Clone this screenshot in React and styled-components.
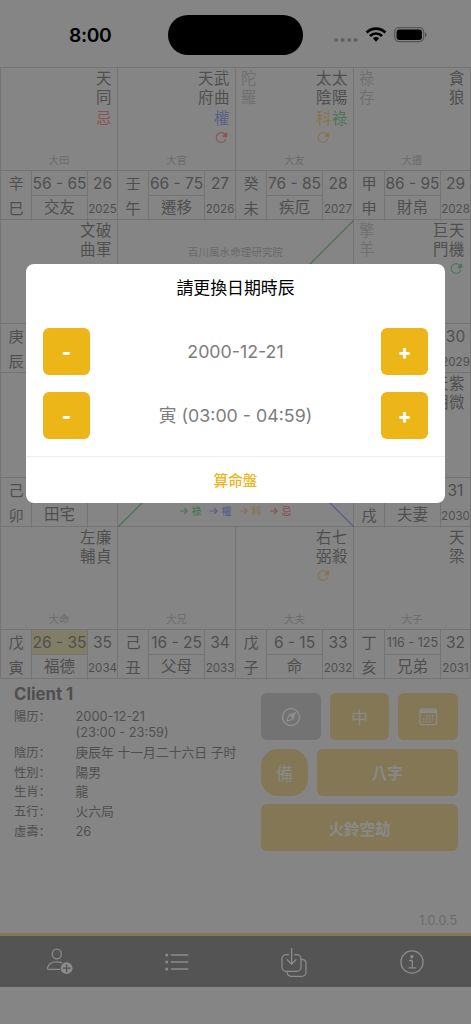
/* eslint-disable react/prop-types */
import React, { useState } from 'react'
import styled, { createGlobalStyle } from 'styled-components'
import { IoReloadOutline } from 'react-icons/io5'

const colors = {
  page: '#858585',
  line: '#747474',
  text: '#4f4f4f',
  soft: '#707070',
  gold: '#847756',
  red: '#8a5254',
  blue: '#58608a',
  green: '#4c7556',
  yellow: '#87744a'
}

// palaces, in reading order. area = name of the grid area
const palaces = [
  { area: 'si', stars: ['天同'], marks: [['忌', 'red']], big: '大田', stem: '辛巳', range: '56 - 65', name: '交友', age: 26, year: 2025 },
  { area: 'wu', stars: ['天府', '武曲'], marks: [null, ['權', 'blue', 'red']], big: '大官', stem: '壬午', range: '66 - 75', name: '遷移', age: 27, year: 2026 },
  { area: 'wei', minor: '陀羅', stars: ['太陰', '太陽'], marks: [['科', 'yellow', 'yellow'], ['祿', 'green']], big: '大友', stem: '癸未', range: '76 - 85', name: '疾厄', age: 28, year: 2027 },
  { area: 'shen', minor: '祿存', stars: ['貪狼'], big: '大遷', stem: '甲申', range: '86 - 95', name: '財帛', age: 29, year: 2028 },
  { area: 'chen', stars: ['文曲', '破軍'], stem: '庚辰' },
  { area: 'you', minor: '擎羊', stars: ['巨門', '天機'], marks: [null, ['', '', 'green']], age: 30, year: 2029 },
  { area: 'mao', stars: [], stem: '己卯', name: '田宅' },
  { area: 'xu', stars: ['天相', '紫微'], stem: '丙戌', name: '夫妻', age: 31, year: 2030 },
  { area: 'yin', stars: ['左輔', '廉貞'], big: '大命', stem: '戊寅', range: '26 - 35', name: '福德', age: 35, year: 2034, active: true },
  { area: 'chou', stars: [], big: '大兄', stem: '己丑', range: '16 - 25', name: '父母', age: 34, year: 2033 },
  { area: 'zi', stars: ['右弼', '七殺'], marks: [['', '', 'yellow'], null], big: '大夫', stem: '戊子', range: '6 - 15', name: '命', age: 33, year: 2032 },
  { area: 'hai', stars: ['天梁'], big: '大子', stem: '丁亥', range: '116 - 125', name: '兄弟', age: 32, year: 2031 }
]

const legend = [
  ['祿', 'green'],
  ['權', 'blue'],
  ['科', 'yellow'],
  ['忌', 'red']
]

const details = [
  ['陽历', '2000-12-21', '(23:00 - 23:59)'],
  ['陰历', '庚辰年 十一月二十六日 子时'],
  ['性別', '陽男'],
  ['生肖', '龍'],
  ['五行', '火六局'],
  ['虛壽', '26']
]

const StatusBar = () => (
  <Status>
    <Clock>8:00</Clock>
    <Island />
    <Signals>
      <svg width='94' height='18' viewBox='0 0 94 18'>
        <g fill='#626262'>
          <circle cx='3.2' cy='14' r='2.1' />
          <circle cx='9.7' cy='14' r='2.1' />
          <circle cx='16.2' cy='14' r='2.1' />
          <circle cx='22.6' cy='14' r='2.1' />
        </g>
        <g fill='none' stroke='#000' strokeWidth='2.7'>
          <path d='M33.6 6.5a13.2 13.2 0 0 1 18.8 0' />
          <path d='M37 10a8.4 8.4 0 0 1 12 0' />
        </g>
        <path d='M39.8 12.3a4.6 4.6 0 0 1 6.4 0L43 15.7z' />
        <rect x='61.7' y='1.7' width='29' height='14' rx='4.4' fill='none' stroke='#555' strokeWidth='1.2' />
        <rect x='63.6' y='3.5' width='25.3' height='10.4' rx='2.7' />
        <path d='M92 6.3c2 .7 2 4.2 0 4.9z' fill='#555' />
      </svg>
    </Signals>
  </Status>
)

const Palace = ({ palace }) => {
  const marks = palace.marks || []
  const range = palace.range || ''
  return (
    <Cell $area={palace.area}>
      <Sky>
        <Minor>{palace.minor}</Minor>
        <Stars>
          {palace.stars.map((star, i) => (
            <Star key={star}>
              {star}
              {marks[i] && marks[i][0] && <Mark $tone={marks[i][1]}>{marks[i][0]}</Mark>}
              {marks[i] && marks[i][2] && (
                <Reload $tone={marks[i][2]}>
                  <IoReloadOutline size={13} />
                </Reload>
              )}
            </Star>
          ))}
        </Stars>
        <Big>{palace.big}</Big>
      </Sky>
      <Info>
        <Stem>{palace.stem}</Stem>
        <Middle>
          <Range $active={palace.active} $long={range.length > 8}>
            {range}
          </Range>
          <Name>{palace.name}</Name>
        </Middle>
        <Ages>
          <span>{palace.age}</span>
          <Year>{palace.year}</Year>
        </Ages>
      </Info>
    </Cell>
  )
}

const Center = () => (
  <CenterArea>
    <Links viewBox='0 0 236 307' fill='none' strokeWidth='1.3'>
      <path d='M236 0L190 46' stroke={colors.green} />
      <path d='M0 307L32 275' stroke={colors.green} />
      <path d='M236 307L204 275' stroke={colors.blue} />
    </Links>
    <Brand>百川風水命理研究院</Brand>
    <Legend>
      {legend.map(([label, tone]) => (
        <LegendItem key={label} $tone={tone}>
          <svg width='8' height='8' viewBox='0 0 8 8' fill='none' stroke='currentColor' strokeWidth='1.1'>
            <path d='M0 4h7M4.2 1L7.2 4l-3 3' />
          </svg>
          {label}
        </LegendItem>
      ))}
    </Legend>
  </CenterArea>
)

const Client = () => (
  <ClientArea>
    <div>
      <ClientName>Client 1</ClientName>
      {details.map(([label, ...values]) => (
        <Detail key={label}>
          <Label>{label}：</Label>
          <div>
            {values.map(v => (
              <Value key={v}>{v}</Value>
            ))}
          </div>
        </Detail>
      ))}
    </div>
    <Actions>
      <ActionRow>
        <Action $gray>
          <svg width='20' height='20' viewBox='0 0 20 20' fill='none' stroke='currentColor' strokeWidth='1.5'>
            <circle cx='10' cy='10' r='8.5' />
            <path d='M14.3 5.7L8 8l-2.3 6.3L12 12z' strokeWidth='1.1' />
            <path d='M14.3 5.7L8 8l4 4z' fill='currentColor' stroke='none' />
          </svg>
        </Action>
        <Action>中</Action>
        <Action>
          <svg width='19' height='18' viewBox='0 0 19 18'>
            <rect x='1' y='1' width='16.6' height='15.6' rx='2' fill='none' stroke='currentColor' strokeWidth='1.3' />
            <path d='M1 2h16.6v3H1z' fill='currentColor' />
            <path d='M7 7.9h8M4 10.8h11M4 13.7h8' stroke='currentColor' strokeWidth='1.6' strokeDasharray='1.6 1.4' />
          </svg>
        </Action>
      </ActionRow>
      <ActionRow>
        <Action $round>備</Action>
        <Action $bold>八字</Action>
      </ActionRow>
      <ActionRow>
        <Action $bold>火鈴空劫</Action>
      </ActionRow>
    </Actions>
  </ClientArea>
)

const TabBar = () => (
  <Tabs>
    <Tab>
      <svg width='30' height='30' viewBox='0 0 30 30'>
        <ellipse cx='12.8' cy='7' rx='4.5' ry='4.9' />
        <path d='M17.6 15.8C16.2 15.1 14.6 14.8 12.8 14.8c-5 0-8.7 2.5-9.3 6.4-.1.8.3 1.2 1 1.2H15.5' />
        <circle cx='22.6' cy='21.2' r='5.9' fill='#8b8b8b' stroke='none' />
        <path d='M22.6 17.8v6.8M19.2 21.2h6.8' stroke='#545454' />
      </svg>
    </Tab>
    <Tab>
      <svg width='30' height='30' viewBox='0 0 30 30'>
        <path d='M9.3 8h16.5M9.3 15h16.5M9.3 22h16.5' />
        <g fill='#8b8b8b' stroke='none'>
          <circle cx='4.7' cy='8' r='1.5' />
          <circle cx='4.7' cy='15' r='1.5' />
          <circle cx='4.7' cy='22' r='1.5' />
        </g>
      </svg>
    </Tab>
    <Tab>
      <svg width='30' height='32' viewBox='0 0 30 32'>
        <path d='M9.5 8.7H7a4 4 0 0 0-4 4v8.6a4 4 0 0 0 4 4h11a4 4 0 0 0 4-4v-8.6a4 4 0 0 0-4-4h-2.3' />
        <path d='M12.6 2.7V18M8.3 13.8l4.3 4.4 4.3-4.4' />
        <path d='M22.2 13.3h.8a4 4 0 0 1 4 4v9a4 4 0 0 1-4 4H12a4 4 0 0 1-3.9-4.2' />
      </svg>
    </Tab>
    <Tab>
      <svg width='30' height='30' viewBox='0 0 30 30'>
        <circle cx='15' cy='15' r='11.1' />
        <path d='M12.6 13.5h2.7v7.3M12 20.9h6.5' />
        <circle cx='14.9' cy='9.7' r='1.7' fill='#8b8b8b' stroke='none' />
      </svg>
    </Tab>
  </Tabs>
)

const branches = '子丑寅卯辰巳午未申酉戌亥'
const pad = n => String(n).padStart(2, '0')

const DateModal = () => {
  const [day, setDay] = useState(21)
  const [hour, setHour] = useState(2)
  const from = pad((hour * 2 + 23) % 24)
  const to = pad(hour * 2)

  return (
    <Modal>
      <ModalTitle>請更換日期時辰</ModalTitle>
      <Picker>
        <Step onClick={() => setDay(Math.max(1, day - 1))}>-</Step>
        <Picked>{`2000-12-${pad(day)}`}</Picked>
        <Step onClick={() => setDay(Math.min(31, day + 1))}>+</Step>
      </Picker>
      <Picker>
        <Step onClick={() => setHour((hour + 11) % 12)}>-</Step>
        <Picked>{`${branches[hour]} (${from}:00 - ${to}:59)`}</Picked>
        <Step onClick={() => setHour((hour + 1) % 12)}>+</Step>
      </Picker>
      <Submit>算命盤</Submit>
    </Modal>
  )
}

const App = () => (
  <Screen>
    <GlobalStyle />
    <StatusBar />
    <Chart>
      {palaces.map(p => (
        <Palace key={p.area} palace={p} />
      ))}
      <Center />
    </Chart>
    <Client />
    <Version>1.0.0.5</Version>
    <TabBar />
    <DateModal />
  </Screen>
)

export default App

const GlobalStyle = createGlobalStyle`
  * {
    box-sizing: border-box;
  }
  body {
    margin: 0;
    background: ${colors.page};
    font-family: Inter, 'Noto Sans CJK TC', sans-serif;
  }
  button {
    padding: 0;
    border: 0;
    font-family: inherit;
    cursor: pointer;
  }
  svg {
    display: block;
  }
`

const Screen = styled.div`
  position: relative;
  display: flex;
  flex-direction: column;
  width: 471px;
  height: 1024px;
  overflow: hidden;
  background: ${colors.page};
  color: ${colors.text};
`

const Status = styled.div`
  display: grid;
  grid-template-columns: 168px 135px 1fr;
  flex: none;
  height: 67px;
  padding-top: 15px;
`

const Clock = styled.div`
  padding-left: 69px;
  font-size: 19.3px;
  font-weight: 600;
  line-height: 41px;
  letter-spacing: -0.4px;
  color: #000;
`

const Island = styled.div`
  height: 40px;
  border-radius: 20px;
  background: #000;
`

const Signals = styled.div`
  padding: 11px 0 0 30px;
`

const Chart = styled.div`
  display: grid;
  flex: none;
  grid-template-columns: 117px 118px 118px 117px;
  grid-template-rows: 152px 153px 154px 152px;
  grid-template-areas:
    'si wu wei shen'
    'chen mid mid you'
    'mao mid mid xu'
    'yin chou zi hai';
  border: solid ${colors.line};
  border-width: 1px 0 0 1px;
`

const Cell = styled.div`
  grid-area: ${props => props.$area};
  display: flex;
  flex-direction: column;
  border: solid ${colors.line};
  border-width: 0 1px 1px 0;
`

const Sky = styled.div`
  position: relative;
  display: flex;
  flex: 1;
  justify-content: space-between;
  padding: 1px 5.5px 0 5px;
  font-size: 15.4px;
  line-height: 19px;
`

const Minor = styled.div`
  width: 15.5px;
  word-break: break-all;
  color: ${colors.soft};
`

const Stars = styled.div`
  display: flex;
  gap: 0.5px;
`

const Star = styled.div`
  width: 15.5px;
  word-break: break-all;
`

const Mark = styled.div`
  margin-top: 2px;
  color: ${props => colors[props.$tone]};
`

const Reload = styled.div`
  margin-top: 3px;
  padding-left: 1px;
  color: ${props => colors[props.$tone]};

  path {
    stroke-width: 40px;
  }
`

// sits over the stars, at the foot of the cell
const Big = styled.div`
  position: absolute;
  left: 0;
  right: 0;
  bottom: 0;
  text-align: center;
  font-size: 10.3px;
  color: #6c6c6c;
`

const Info = styled.div`
  display: grid;
  grid-template-columns: 30px 57px 1fr;
  height: 49px;
  border-top: 1px solid ${colors.line};
  font-size: 15.5px;
  text-align: center;
`

const Stem = styled.div`
  padding: 1px 7px 0;
  font-size: 15.2px;
  line-height: 24.5px;
  word-break: break-all;
`

const Middle = styled.div`
  display: grid;
  grid-template-rows: 25px 1fr;
  border: solid ${colors.line};
  border-width: 0 1px;
`

const Range = styled.div`
  border-bottom: 1px solid ${colors.line};
  background: ${props => (props.$active ? '#807e66' : 'transparent')};
  font-size: ${props => (props.$long ? '12.6px' : '15.5px')};
  line-height: 26px;
  white-space: nowrap;
`

const Name = styled.div`
  font-size: 15.5px;
  line-height: 24px;
`

const Ages = styled.div`
  display: flex;
  flex-direction: column;
  align-items: center;
  line-height: 26px;
`

const Year = styled.span`
  font-size: 11.6px;
  line-height: 24px;
`

const CenterArea = styled.div`
  grid-area: mid;
  position: relative;
  display: flex;
  flex-direction: column;
  justify-content: space-between;
  border: solid ${colors.line};
  border-width: 0 1px 1px 0;
`

// lines that run across the texts of the center
const Links = styled.svg`
  position: absolute;
  inset: 0;
  width: 236px;
  height: 307px;
`

const Brand = styled.div`
  padding-top: 25px;
  text-align: center;
  font-size: 10.6px;
  line-height: 16px;
  color: #6a6a6a;
`

const Legend = styled.div`
  display: flex;
  justify-content: center;
  gap: 8px;
  padding-bottom: 7px;
  font-size: 10px;
  font-weight: 500;
  line-height: 16px;
`

const LegendItem = styled.div`
  display: flex;
  align-items: center;
  gap: 4px;
  color: ${props => colors[props.$tone]};
`

const ClientArea = styled.div`
  display: grid;
  flex: none;
  grid-template-columns: 247px 197px;
  height: 232px;
  padding: 4px 0 0 14px;
`

const ClientName = styled.div`
  margin-bottom: 4px;
  font-size: 16.8px;
  font-weight: 700;
  line-height: 22px;
`

const Detail = styled.div`
  display: grid;
  grid-template-columns: 61.5px 1fr;
  margin-bottom: 3.8px;
  font-size: 12.3px;
  line-height: 16px;
`

const Label = styled.div`
  font-family: Inter, 'Noto Sans CJK SC', sans-serif;
`

const Value = styled.div`
  font-size: 12.8px;
  white-space: nowrap;
`

const Actions = styled.div`
  display: flex;
  flex-direction: column;
  gap: 8.6px;
  padding-top: 10px;
`

const ActionRow = styled.div`
  display: flex;
  gap: 8.6px;
  height: 47px;
`

const Action = styled.button`
  display: flex;
  flex: ${props => (props.$round ? '0 0 47px' : '1')};
  align-items: center;
  justify-content: center;
  border-radius: ${props => (props.$round ? '17px' : '6px')};
  background: ${props => (props.$gray ? '#737373' : colors.gold)};
  color: ${props => (props.$gray ? '#8e8e8e' : '#898989')};
  font-size: ${props => (props.$bold ? '15.5px' : '17px')};
  font-weight: ${props => (props.$bold ? 700 : 400)};
`

const Version = styled.div`
  height: 22px;
  padding-right: 14px;
  text-align: right;
  font-size: 12.5px;
  line-height: 20px;
  color: #6b6b6b;
`

const Tabs = styled.nav`
  display: grid;
  flex: none;
  grid-template-columns: repeat(4, 1fr);
  height: 54px;
  border-top: 3px solid ${colors.gold};
  background: #545454;
`

const Tab = styled.div`
  display: flex;
  align-items: center;
  justify-content: center;

  svg {
    fill: none;
    stroke: #8b8b8b;
    stroke-width: 1.3;
    stroke-linecap: round;
    stroke-linejoin: round;
  }
`

const Modal = styled.div`
  position: absolute;
  top: 264px;
  left: 26px;
  width: 419px;
  height: 239px;
  border-radius: 8px;
  background: #fff;
`

const ModalTitle = styled.div`
  height: 64px;
  text-align: center;
  font-size: 16.9px;
  line-height: 48px;
  color: #000;
`

const Picker = styled.div`
  display: flex;
  align-items: center;
  justify-content: space-between;
  margin-bottom: 17px;
  padding: 0 17px;
`

const Step = styled.button`
  width: 47px;
  height: 47px;
  border-radius: 6px;
  background: #ecb518;
  color: #fff;
  font-size: 20px;
  font-weight: 800;
`

const Picked = styled.div`
  font-size: 17.8px;
  line-height: 24px;
  color: #7d7d7d;
`

const Submit = styled.button`
  width: 100%;
  height: 47px;
  padding-bottom: 1px;
  border-top: 1px solid #eee;
  background: transparent;
  color: #ecb518;
  font-size: 14.6px;
  font-weight: 500;
`
